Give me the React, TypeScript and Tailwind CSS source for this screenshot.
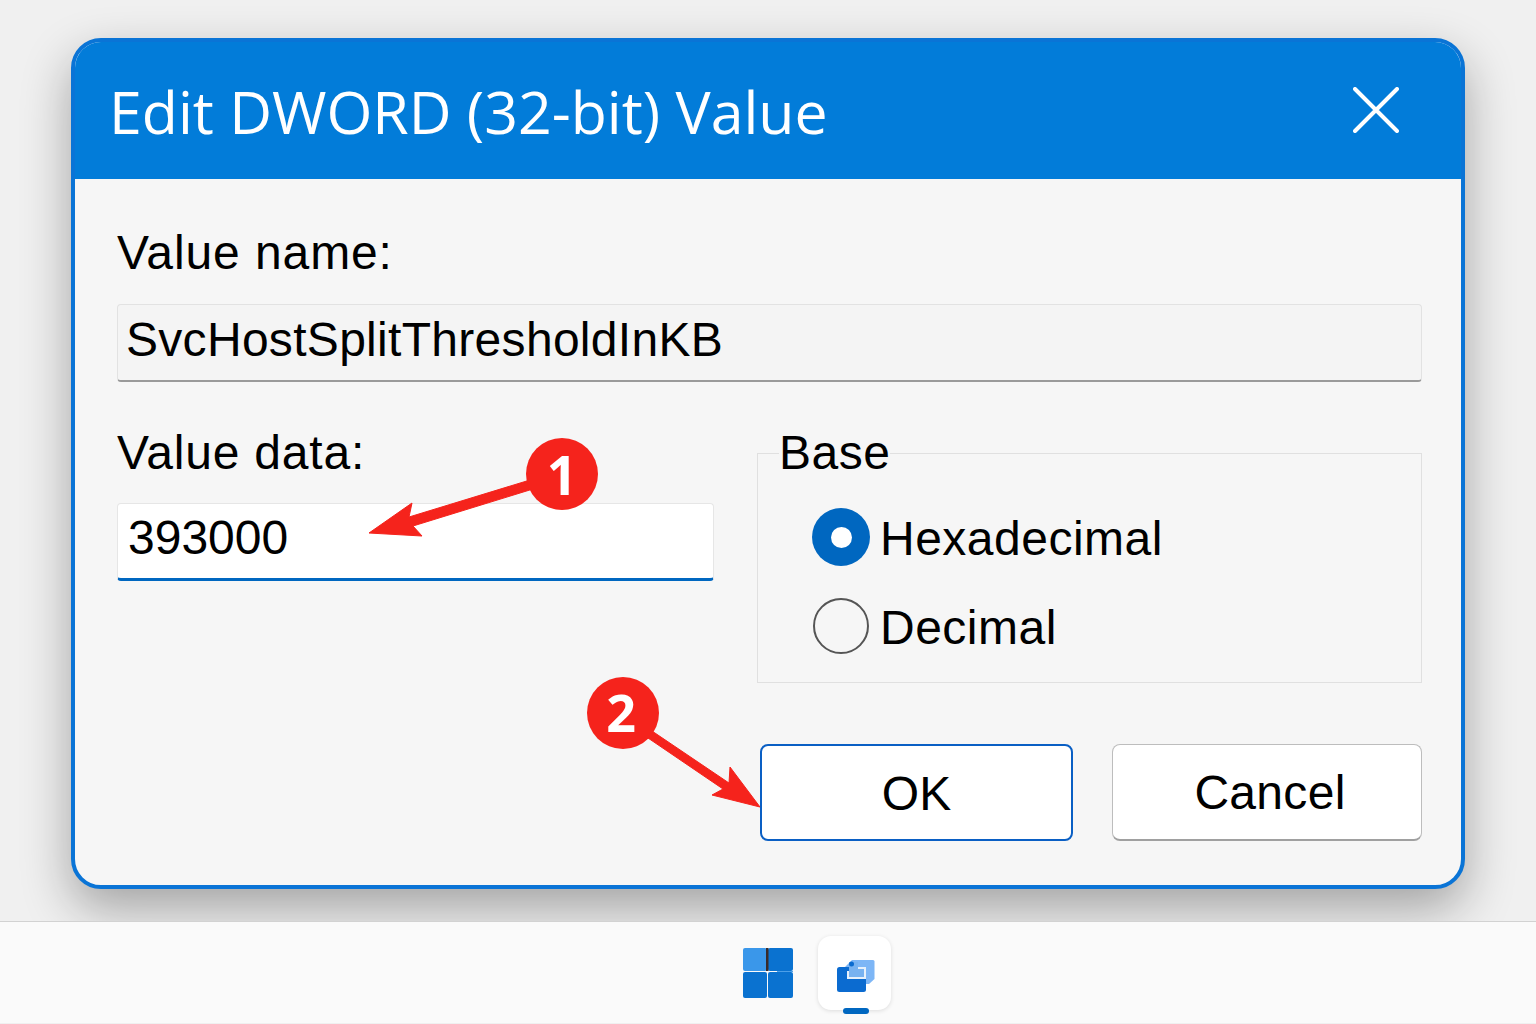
const segoe = "font-['Open_Sans','Noto_Sans',sans-serif]";

function WindowsLogo() {
  return (
    <svg width="52" height="52" viewBox="0 0 52 52">
      <rect x="1" y="1" width="24" height="23" rx="2" fill="#3a97ea" />
      <rect x="26" y="1" width="25" height="23" rx="2" fill="#0a72d0" />
      <rect x="1" y="25" width="24" height="26" rx="2" fill="#0a72d0" />
      <rect x="26" y="25" width="25" height="26" rx="2" fill="#0a72d0" />
      <rect x="24" y="1" width="2.5" height="23" fill="#3a2a28" />
      <rect x="35" y="24" width="16" height="1" fill="#4c9fe8" />
    </svg>
  );
}

function AppIcon() {
  return (
    <svg width="42" height="36" viewBox="0 0 42 36" className="ml-[4px] mt-[4px]">
      <path d="M9 10 L16 3 H37 Q38.500 3 38.500 4.500 V22 L33 27 H9 Z" fill="#7db6f6" />
      <rect x="1" y="10" width="29" height="25" rx="2.500" fill="#0b6bd0" />
      <path d="M13 5 V20 H29 V11 H22 V5 Z" fill="#78b2f0" />
      <path d="M12 14 V21 H29 V11 H22" fill="none" stroke="#e6f0fb" strokeWidth="2" />
      <circle cx="15.500" cy="7" r="2.500" fill="#0b6bd0" />
    </svg>
  );
}

function Radio({ checked, label }: { checked?: boolean; label: string }) {
  return (
    <div className="flex h-[58px] items-center gap-[10px]">
      {checked ? (
        <span className="flex h-[58px] w-[58px] items-center justify-center rounded-full bg-[#0067c0]">
          <span className="h-[21px] w-[21px] rounded-full bg-white" />
        </span>
      ) : (
        <span className="ml-px mr-px h-[56px] w-[56px] rounded-full border-2 border-[#555555]" />
      )}
      <span className="pt-[4px] text-[48px] leading-none tracking-[0.5px] text-black">{label}</span>
    </div>
  );
}

export default function App() {
  return (
    <div className="relative h-[1024px] w-[1536px] overflow-hidden bg-[#f0f0f0] font-['Liberation_Sans',Arial,sans-serif]">
      <div className="h-[922px] overflow-hidden border-b border-[#d2d2d2] pl-[71px] pt-[38px]">
        <div className="flex h-[851px] w-[1394px] flex-col overflow-hidden rounded-[30px] border-4 border-[#0a74d6] bg-[#f6f6f6] shadow-[0_20px_50px_rgba(0,0,0,0.32)]">
          <div className={`flex h-[137px] shrink-0 items-center justify-between bg-[#027cd9] pl-[34px] pr-[62px] ${segoe}`}>
            <h1 className="mt-[2px] text-[59px] font-normal leading-none text-white">Edit DWORD (32-bit) Value</h1>
            <svg width="46" height="46" viewBox="0 0 46 46" className="-mt-[2px]" stroke="white" strokeWidth="4" strokeLinecap="round">
              <path d="M2 2 L44 44 M44 2 L2 44" />
            </svg>
          </div>

          <div className="flex flex-1 flex-col pl-[42px] pr-[39px] pt-[46px]">
            <label className="text-[48px] leading-[56px] tracking-[0.9px] text-black">Value name:</label>
            <input
              readOnly
              value="SvcHostSplitThresholdInKB"
              className="mt-[23px] h-[78px] w-full rounded-[4px] border border-[#e2e2e2] border-b-2 border-b-[#9a9a9a] bg-[#f4f4f4] px-[8px] pb-[6px] text-[48px] tracking-[0.3px] text-black outline-none"
            />

            <div className="mt-[43px] flex items-start gap-[43px]">
              <div className="w-[597px]">
                <label className="text-[48px] leading-[56px] tracking-[0.8px] text-black">Value data:</label>
                <input
                  readOnly
                  value="393000"
                  className="mt-[22px] h-[78px] w-full rounded-[4px] border border-[#e6e6e6] border-b-[3px] border-b-[#0067c0] bg-white px-[10px] pb-[7px] text-[48px] text-black outline-none"
                />
              </div>
              <fieldset className="h-[258px] flex-1 border border-[#e0e0e0] pl-[54px]">
                <legend className="-ml-[33px] px-0 text-[48px] leading-[56px] tracking-[0.5px] text-black">Base</legend>
                <div className="mt-[27px] flex flex-col gap-[31px]">
                  <Radio checked label="Hexadecimal" />
                  <Radio label="Decimal" />
                </div>
              </fieldset>
            </div>

            <div className="mt-[61px] flex justify-end gap-[39px]">
              <button className="h-[97px] w-[313px] rounded-[8px] border-2 border-[#0a5fc4] bg-white pt-[2px] text-[48px] text-black">OK</button>
              <button className="h-[97px] w-[310px] rounded-[8px] border border-[#bdbdbd] border-b-2 border-b-[#a0a0a0] bg-white pl-[6px] pt-[2px] text-[48px] tracking-[0.3px] text-black">Cancel</button>
            </div>
          </div>
        </div>
      </div>

      <div className="flex h-[101px] items-start justify-center bg-[#fafafa]">
        <div className="ml-[97px] mt-[25px]">
          <WindowsLogo />
        </div>
        <div className="relative ml-[24px] mt-[14px] flex h-[74px] w-[73px] items-center justify-center rounded-[13px] bg-white shadow-[0_1px_4px_rgba(0,0,0,0.12)]">
          <AppIcon />
          <span className="absolute -bottom-[4px] left-[25px] h-[6px] w-[26px] rounded-full bg-[#0067c0]" />
        </div>
      </div>

      {/* callouts */}
      <svg className="absolute left-0 top-0" width="1536" height="1024" viewBox="0 0 1536 1024">
        <path d="M369 533 L412 503 L409 517 L530 480 L533 489 L413 526 L422 536 Z" fill="#f5231c" stroke="#f5231c" strokeWidth="1" strokeLinejoin="round" />
        <circle cx="562" cy="474" r="36" fill="#f5231c" />
        <path d="M652 731 L729 783 L730 767 L760 807 L712 795 L723 789 L648 738 Z" fill="#f5231c" stroke="#f5231c" strokeWidth="1" strokeLinejoin="round" />
        <circle cx="623" cy="713" r="36" fill="#f5231c" />
        <text x="562" y="495" textAnchor="middle" fontFamily="'Open Sans',sans-serif" fontWeight="700" fontSize="53" fill="white">1</text>
        <text x="621" y="732" textAnchor="middle" fontFamily="'Open Sans',sans-serif" fontWeight="700" fontSize="52" fill="white">2</text>
      </svg>
    </div>
  );
}
